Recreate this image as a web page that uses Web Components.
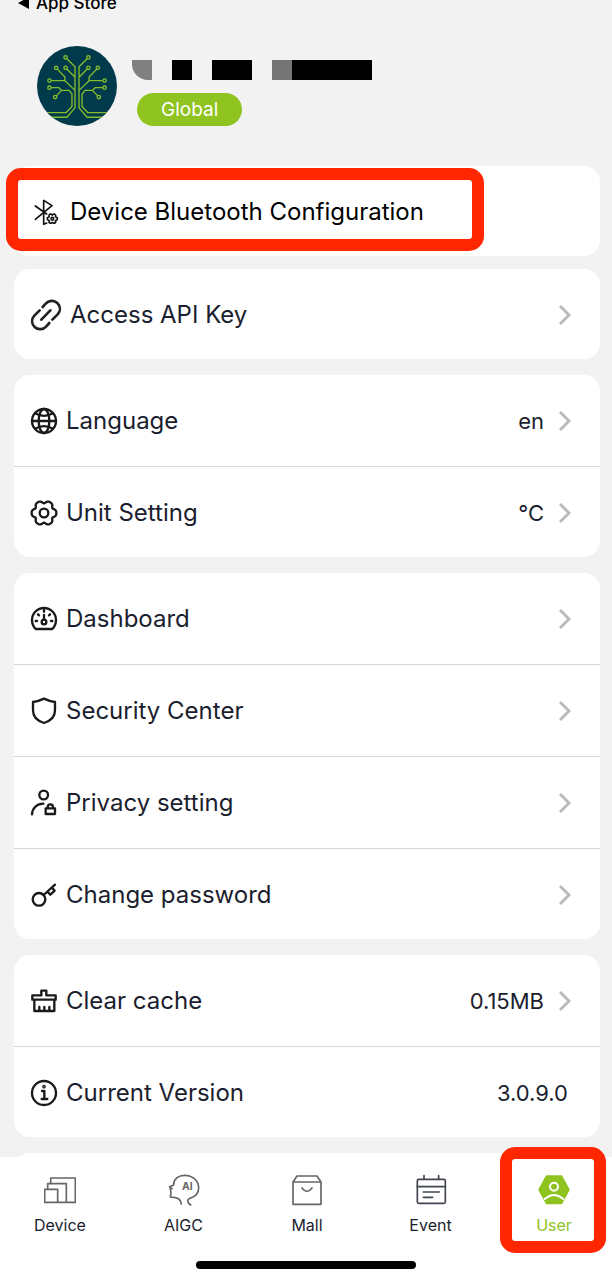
<!DOCTYPE html>
<html lang="en">
<head>
<meta charset="utf-8">
<meta name="viewport" content="width=device-width, initial-scale=1">
<title>User settings</title>
<style>
  html, body { margin: 0; height: 100%; }
  body {
    font-family: Inter, "Liberation Sans", sans-serif;
    background: #f2f2f2;
    color: #1b1e2e;
  }
</style>
</head>
<body>
<app-shell>
  <status-bar slot="top">App Store</status-bar>
  <user-header>Global</user-header>

  <settings-card class="first">
    <settings-row icon="bluetooth" label="Device Bluetooth Configuration" strong></settings-row>
    <highlight-box></highlight-box>
  </settings-card>
  <settings-card>
    <settings-row icon="link" label="Access API Key" arrow></settings-row>
  </settings-card>
  <settings-card>
    <settings-row icon="globe" label="Language" arrow>en</settings-row>
    <settings-row icon="gear" label="Unit Setting" arrow>°C</settings-row>
  </settings-card>
  <settings-card>
    <settings-row icon="dashboard" label="Dashboard" arrow></settings-row>
    <settings-row icon="shield" label="Security Center" arrow></settings-row>
    <settings-row icon="privacy" label="Privacy setting" arrow></settings-row>
    <settings-row icon="key" label="Change password" arrow></settings-row>
  </settings-card>
  <settings-card>
    <settings-row icon="broom" label="Clear cache" arrow>0.15MB</settings-row>
    <settings-row icon="info" label="Current Version" static>3.0.9.0</settings-row>
  </settings-card>
  <settings-card></settings-card>

  <tab-bar slot="bottom">
    <tab-item icon="device">Device</tab-item>
    <tab-item icon="aigc">AIGC</tab-item>
    <tab-item icon="mall">Mall</tab-item>
    <tab-item icon="event">Event</tab-item>
    <tab-item icon="user" active>User</tab-item>
  </tab-bar>
</app-shell>

<script>
// Outline of a six-lobed cog around (cx, cy)
function cog(cx, cy, outer, dip) {
  const points = [];
  for (let i = 0; i < 90; i++) {
    const t = i * Math.PI / 45;
    const r = outer - dip * Math.pow((1 - Math.cos(6 * t)) / 2, 2);
    points.push((cx + r * Math.cos(t)).toFixed(1) + ',' + (cy + r * Math.sin(t)).toFixed(1));
  }
  return `<polygon points="${points.join(' ')}"/>`;
}

// name: [width, height, viewBox, stroke width, colour, markup]
const ICONS = {
  bluetooth: [32, 28, '0 0 96 84', 5, '#111', `<path d="M16 24L50 48M16 64L66 23L41 7V79L50 75"/>${cog(67, 62, 15, 4)}<circle cx="67" cy="62" r="4"/>`],
  link: [32, 32, '0 0 96 96', 8, '#222', '<path d="M38 24L47 14C56 4 72 2 82 12C92 22 92 36 83 46L67 62M58 72L49 82C40 92 24 94 14 84C4 74 4 60 13 50L29 34M34 62L61 34"/>'],
  globe: [28, 28, '0 0 84 84', 7, '#1a1a1a', '<circle cx="42" cy="42" r="36"/><ellipse cx="42" cy="42" rx="16" ry="36"/><path d="M6 42H78M15 19Q42 34 69 19M15 65Q42 50 69 65"/>'],
  gear: [28, 28, '0 0 84 84', 7, '#1a1a1a', `${cog(42, 42, 37, 8)}<circle cx="42" cy="42" r="13"/>`],
  dashboard: [28, 28, '0 0 84 84', 7, '#1a1a1a', '<path d="M17 72H67Q78 61 78 45A36 36 0 0 0 6 45Q6 61 17 72Z"/><circle cx="42" cy="51" r="7"/><path d="M42 43V30M42 15V20M17 48H21M63 48H67M24 28L27 31M60 28L57 31"/>'],
  shield: [28, 28, '0 0 84 84', 7, '#1a1a1a', '<path d="M42 5Q58 13 75 15V40Q75 68 42 78Q9 68 9 40V15Q26 13 42 5Z"/>'],
  privacy: [28, 28, '0 0 84 84', 7, '#1a1a1a', '<circle cx="41" cy="18" r="13"/><path d="M6 76C7 58 20 44 40 44M47 58H75V75H47ZM53 57V54A8 8 0 0 1 69 54V57"/>'],
  key: [28, 28, '0 0 84 84', 7, '#1a1a1a', '<circle cx="27" cy="55" r="19"/><path d="M41 42L75 11M53 33L61 41L74 29L67 21"/>'],
  broom: [28, 28, '0 0 84 84', 7, '#1a1a1a', '<path d="M34 25V11H49V25H77V38H7V25H34M13 38V72H73V38M28 60V72M43 60V72M58 60V72"/>'],
  info: [28, 28, '0 0 84 84', 7, '#1a1a1a', '<circle cx="42" cy="42" r="36"/><path d="M36 36H43V60M35 60H52"/><circle cx="42" cy="23" r="2"/>'],
  chevron: [12, 20, '0 0 12 20', 3, '#bbb', '<path stroke-linejoin="miter" stroke-linecap="butt" d="M1 1L10 10L1 19"/>'],
  device: [32, 32, '0 0 96 96', 5, '#666', '<path d="M2 46H41V85H2ZM11 46V29H67V85M20 29V12H94V85H41"/>'],
  aigc: [32, 32, '0 0 96 96', 5, '#666', '<path d="M40 90C38 80 32 72 22 71L7 69L9 56L6 38L17 33C16 14 32 4 50 4C74 4 92 21 92 41C92 58 82 68 66 73C56 77 58 86 68 93M5 38L12 44"/><text x="42" y="49" font-family="Inter, sans-serif" font-weight="700" font-size="31" fill="#666" stroke="none">AI</text>'],
  mall: [32, 32, '0 0 96 96', 5, '#666', '<path d="M6 24L18 6H78L90 24V91H6ZM6 24H90M33 42Q48 62 63 42"/>'],
  event: [32, 32, '0 0 96 96', 5, '#40454f', '<rect x="7" y="16" width="84" height="72" rx="4"/><path d="M7 38H91M27 5V16M71 5V16M25 54H73M25 70H53"/>'],
  user: [32, 32, '0 0 96 96', 6, '#8fc31f', '<path fill="#8fc31f" d="M26 7H70L92 47L70 88H26L4 47Z"/><circle cx="48" cy="38" r="12" stroke="#fff"/><path stroke="#fff" d="M20 75Q48 51 76 75"/>'],
};

function icon(name) {
  const [w, h, box, stroke, colour, body] = ICONS[name];
  return `<svg width="${w}" height="${h}" viewBox="${box}" fill="none" stroke="${colour}" stroke-width="${stroke}" stroke-linecap="round" stroke-linejoin="round" aria-hidden="true">${body}</svg>`;
}

class Base extends HTMLElement {
  connectedCallback() {
    if (this.shadowRoot) return;
    this.attachShadow({ mode: 'open' }).innerHTML = this.render();
  }
}

customElements.define('app-shell', class extends Base {
  render() {
    return `<style>
      :host { display: flex; flex-direction: column; height: 100vh; overflow: hidden; }
      main { flex: 1; min-height: 0; overflow-y: auto; scrollbar-width: none;
        display: flex; flex-direction: column; gap: 16px; padding: 0 12px 0 14px; }
      main ::slotted(*) { flex: none; }
      main ::slotted(.first) { margin-bottom: -3px; }
    </style>
    <slot name="top"></slot><main><slot></slot></main><slot name="bottom"></slot>`;
  }
});

customElements.define('status-bar', class extends Base {
  render() {
    return `<style>
      :host { display: flex; align-items: flex-end; height: 14px; flex: none; padding-left: 18px; }
      a { display: flex; align-items: center; gap: 7px; color: #000; text-decoration: none;
        font-size: 17px; line-height: 22px; font-weight: 500; }
    </style>
    <a href="#store"><svg width="11" height="12" viewBox="0 0 11 12" aria-hidden="true"><path d="M0 6L11 0V12Z"/></svg><span><slot></slot></span></a>`;
  }
});

customElements.define('user-header', class extends Base {
  render() {
    const half = `<path d="M108 54L136 82V204L112 232H45M80 85L106 112V123L136 152M108 85L136 113M60 123H106M60 144H88L96 152H118L127 163V200L110 218H40M77 172L96 152"/>
      <g fill="#003a4b"><circle cx="108" cy="54" r="5"/><circle cx="80" cy="85" r="5"/><circle cx="108" cy="85" r="5"/><circle cx="60" cy="123" r="5"/><circle cx="60" cy="144" r="5"/><circle cx="77" cy="172" r="5"/></g>`;
    return `<style>
      :host { display: flex; gap: 15px; height: 88px; padding: 32px 0 16px 23px; }
      .avatar { flex: none; border-radius: 50%; }
      .info { display: flex; flex-direction: column; align-items: flex-start; gap: 13px; padding-top: 14px; }
      .name { display: flex; height: 20px; }
      .name i { width: 20px; margin-right: 20px; background: #000; }
      .name i.a { background: #808080; border-bottom-left-radius: 16px; }
      .name i.b { width: 40px; }
      .name i.c { background: #757575; margin-right: 0; }
      .name i.d { width: 80px; margin-right: 0; }
      button { margin: 0 0 0 5px; border: 0; padding: 0 24px; height: 33px; border-radius: 17px; background: #8fc31f;
        color: #fff; font: inherit; font-size: 19px; line-height: 33px; }
    </style>
    <svg class="avatar" width="80" height="80" viewBox="23 20 238 238" fill="none" stroke="#84bd2f" stroke-width="4" role="img" aria-label="Avatar">
      <path fill="#003a4b" stroke="none" d="M23 20H261V258H23Z"/>
      <g>${half}</g><g transform="translate(284 0) scale(-1 1)">${half}</g>
    </svg>
    <div class="info">
      <div class="name"><i class="a"></i><i></i><i class="b"></i><i class="c"></i><i class="d"></i></div>
      <button type="button"><slot></slot></button>
    </div>`;
  }
});

customElements.define('settings-card', class extends Base {
  render() {
    return `<style>
      :host { display: block; position: relative; min-height: 90px; background: #fff; border-radius: 16px; }
      ::slotted(settings-row:not(:last-of-type)) { border-bottom: 1px solid #d6d6d8; padding-bottom: 1px; }
    </style><slot></slot>`;
  }
});

customElements.define('settings-row', class extends Base {
  render() {
    const tag = this.hasAttribute('static') ? 'div' : 'button';
    const type = tag === 'button' ? ' type="button"' : '';
    return `<style>
      :host { display: block; }
      .row { display: flex; align-items: center; width: 100%; height: 90px; margin: 0; border: 0; box-sizing: border-box;
        padding: 2px 29px 0 16px; background: none; color: inherit; font: inherit; text-align: left; }
      svg { flex: none; display: block; }
      .label { flex: 1; margin-left: 8px; font-size: 24px; line-height: 32px; white-space: nowrap; }
      .value { font-size: 22px; line-height: 32px; }
      .value + svg { margin-left: 15px; }
      div.row { padding-right: 32px; }
      :host([strong]) .row { color: #000; }
    </style>
    <${tag}${type} class="row">${icon(this.getAttribute('icon'))}<span class="label">${this.getAttribute('label')}</span><span class="value"><slot></slot></span>${this.hasAttribute('arrow') ? icon('chevron') : ''}</${tag}>`;
  }
});

customElements.define('highlight-box', class extends Base {
  render() {
    return `<style>
      :host { position: absolute; left: -8px; top: 2px; width: 478px; height: 83px; box-sizing: border-box;
        border: 12px solid #ff2600; border-radius: 15px; pointer-events: none; }
    </style>`;
  }
});

customElements.define('tab-bar', class extends Base {
  render() {
    return `<style>
      :host { display: block; flex: none; background: #fff; position: relative; }
      nav { display: flex; justify-content: space-between; padding: 17px 26px 24px 28px; }
      .home { width: 36%; height: 8px; margin: 0 auto 11px; border-radius: 4px; background: #000; }
    </style><nav><slot></slot></nav><div class="home"></div>`;
  }
});

customElements.define('tab-item', class extends Base {
  render() {
    return `<style>
      :host { display: block; position: relative; width: 64px; }
      a { display: flex; flex-direction: column; align-items: center; gap: 8px; color: inherit; text-decoration: none;
        font-size: 16px; line-height: 22px; padding-bottom: 1px; }
      :host([active]) a { color: #8fc31f; }
      highlight-box { left: -22px; top: -27px; width: 106px; height: 106px; }
    </style>
    <a href="#${this.getAttribute('icon')}"${this.hasAttribute('active') ? ' aria-current="page"' : ''}>${icon(this.getAttribute('icon'))}<span><slot></slot></span></a>${this.hasAttribute('active') ? '<highlight-box></highlight-box>' : ''}`;
  }
});
</script>
</body>
</html>
